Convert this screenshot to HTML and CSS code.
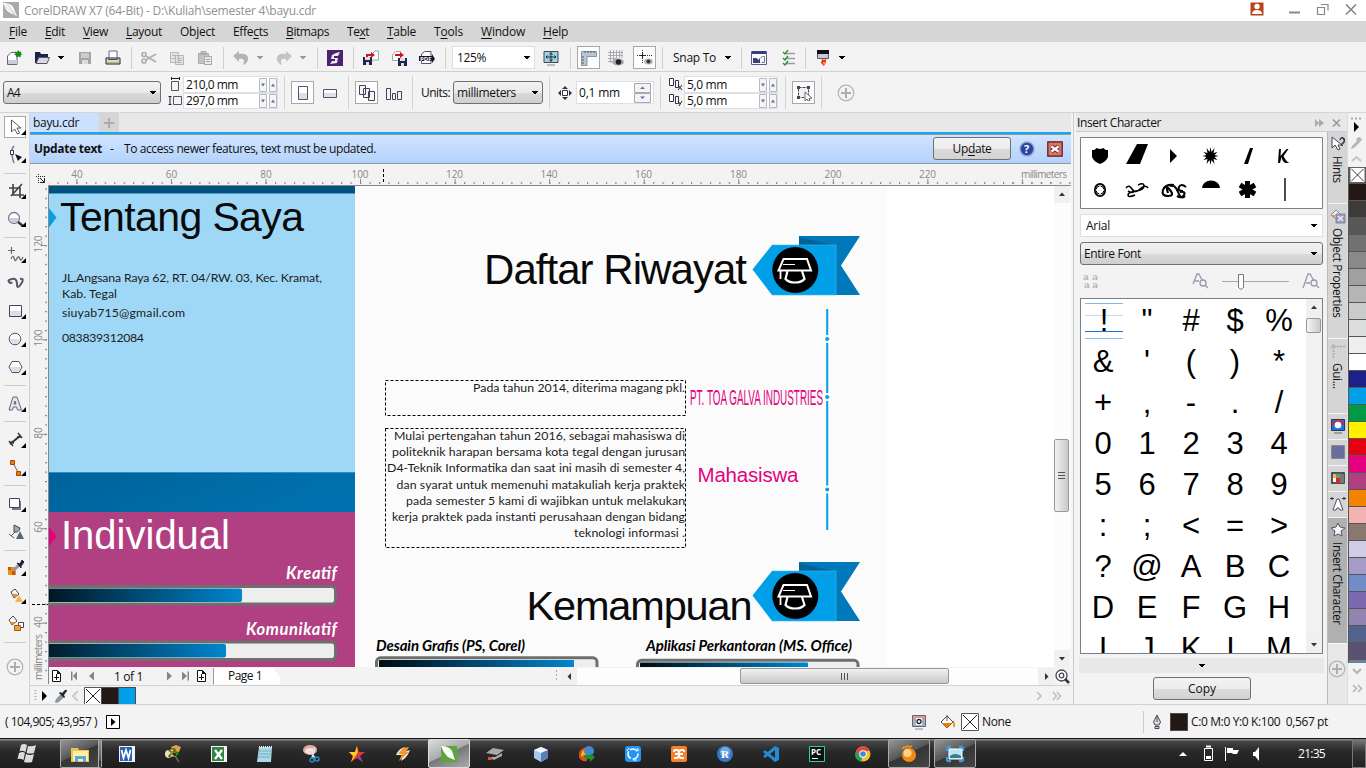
FILE: index.html
```html
<!DOCTYPE html>
<html lang="en">
<head>
<meta charset="utf-8">
<title>CorelDRAW X7 (64-Bit) - D:\Kuliah\semester 4\bayu.cdr</title>
<link rel="stylesheet" href="styles.css">
</head>
<body>
<svg class="defs" width="0" height="0">
  <defs>
    <symbol id="down" viewBox="0 0 8 16"><path d="M1 6h6v1h-1v1h-1v1h-2v-1h-1v-1h-1z"/></symbol>
    <symbol id="plus" viewBox="0 0 18 18"><circle cx="9" cy="9" r="7.800" fill="none" stroke="#b3b3b3" stroke-width="1.200"/><path d="M9 4v10M4 9h10" stroke="#adadad" stroke-width="2"/></symbol>
    <symbol id="spin" viewBox="0 0 18 14"><path d="M.5.5h7v13h-7zM10.500 .5h7v13h-7z" fill="#f5f5f5" stroke="#b9b9c0"/><path d="M2 5.500h4l-2 3zM12 8.500h4l-2-3z" fill="#5470b0"/></symbol>
    <symbol id="corner" viewBox="0 0 28 28"><path d="M25 17v5h-5z" fill="#000"/></symbol>
    <symbol id="page" viewBox="0 0 16 16"><path d="M3.500 2.500h5l3 3v8h-8z" fill="#fff" stroke="#111"/><path d="M8 2v4h4" fill="#111"/><path d="M7.500 6v6M5 9.500h5" stroke="#111"/></symbol>
    <symbol id="pen" viewBox="0 0 16 16"><path d="M2 14l1-3 5-5 3 3-5 5-3 1z" fill="#8a9a9e"/><path d="M7 4l2 1 3-3q2-1 2 1l-3 4 1 2-1 1-5-5z" fill="#26262e"/></symbol>
    <symbol id="none" viewBox="0 0 18 18"><path d="M.5.5h17v17h-17z" fill="#fff" stroke="#555"/><path d="M2 2l14 14M16 2l-14 14" stroke="#222"/></symbol>
    <linearGradient id="bar"><stop offset="0" stop-color="#000c12"/><stop offset="1" stop-color="#0086cf"/></linearGradient>
    <linearGradient id="band" x2="1" y2=".3"><stop offset="0" stop-color="#00629a"/><stop offset="1" stop-color="#0071ae"/></linearGradient>
    <pattern id="tickH" x="76.400" y="0" width="9.455" height="22" patternUnits="userSpaceOnUse"><path d="M0 18h1.200v2h-1.200z" fill="#888"/></pattern>
    <pattern id="tickH2" x="76.400" y="0" width="94.550" height="22" patternUnits="userSpaceOnUse"><path d="M0 15h1v5h-1z" fill="#888"/></pattern>
    <pattern id="tickV" x="30" y="245" width="20" height="9.440" patternUnits="userSpaceOnUse"><path d="M15 0h2v1.200h-2z" fill="#888"/></pattern>
    <pattern id="tickV2" x="30" y="245" width="20" height="94.400" patternUnits="userSpaceOnUse"><path d="M12 0h5v1h-5z" fill="#888"/></pattern>
    <g id="ribbon">
      <path d="M799 236h61l-19 29.500 19 29.500h-61z" fill="#0079bb"/><path d="M799 237l34 8h-34z" fill="#00649a"/>
      <path d="M752.500 269.500L772 245h64v50h-64z" fill="#009fe8"/><path d="M772 245h64v50h-64" fill="none" stroke="#42b8f0" stroke-width=".6"/>
      <circle cx="795.300" cy="270" r="23"/>
      <g fill="none" stroke="#fff" stroke-width="2"><path d="M783.500 259h23.500l4 11.500h-32.500z"/><path d="M783 264.500h12" stroke-width="1"/><path d="M787.500 271l-2 8q3 3.500 9.500 3.500t9.500-3.500l-2.500-8" stroke-width="2.200"/><path d="M780.500 271v3M780.500 274v5" stroke-width="1.800"/></g>
    </g>
  </defs>
</svg>
<div class="app">
  <header class="titlebar">
    <svg width="16" height="16" viewBox="0 0 16 16"><path d="M0 0h16v16H0z" fill="#aaa"/><path d="M0 1q7 0 10 4l4 9-7-3Q2 8 0 1z" fill="#fff"/><path d="M1 3l11 10M4 2l8 10" stroke="#aaa" stroke-width=".6"/></svg>
    <span class="title" data-w="292">CorelDRAW X7 (64-Bit) - D:\Kuliah\semester 4\bayu.cdr</span>
    <svg class="winbtns" width="112" height="20" viewBox="0 0 112 20"><path d="M3.500 2.500h13v13h-13z" fill="#b9431c"/><circle cx="10" cy="6.500" r="2.700" fill="#fff"/><path d="M5 14q0-4 5-4t5 4z" fill="#fff"/><path d="M42 12.500h11" stroke="#888" stroke-width="2"/><path d="M74 4.500h7v6M70.500 7.500h7v7h-7z" fill="none" stroke="#888" stroke-width="1.200"/><path d="M99 4.500l10 10M109 4.500l-10 10" stroke="#888" stroke-width="1.700"/></svg>
  </header>
  <nav class="menu">
    <span data-w="18"><u>F</u>ile</span><span data-w="20"><u>E</u>dit</span><span data-w="25"><u>V</u>iew</span><span data-w="36"><u>L</u>ayout</span><span data-w="35">Ob<u>j</u>ect</span><span data-w="35">Effe<u>c</u>ts</span><span data-w="43"><u>B</u>itmaps</span><span data-w="22">Te<u>x</u>t</span><span data-w="29"><u>T</u>able</span><span data-w="29">T<u>o</u>ols</span><span data-w="44"><u>W</u>indow</span><span data-w="25"><u>H</u>elp</span>
  </nav>
  <div class="toolbar standard">
    <svg class="i" viewBox="0 0 16 16"><path d="M1.500 6l3.500-3.500h6V14.500H1.500z" fill="#fff" stroke="#667"/><path d="M2 10h9v4H2z" fill="#ccd"/><path d="M12.500 0l1 2 2-.5-.5 2 1 1-1.500 1v2l-2-1-2 1-.5-2-2-1 1.500-1-.5-2 2 .500z" fill="#168a16"/></svg>
    <svg class="i" viewBox="0 0 16 16"><path d="M0 2h5l1 2h7v3H4l-3 6H0z" fill="#1c2348"/><path d="M4 7.500h10.500L12 13.500H1z" fill="#d8d8e6" stroke="#556"/></svg>
    <svg class="a"><use href="#down"/></svg>
    <svg class="i" viewBox="0 0 16 16"><path d="M2 2h12v12H2z" fill="#a5a5a5"/><path d="M4 3h8v5H4z" fill="#ccc"/><path d="M5 10h6v4H5z" fill="#ddd"/></svg>
    <svg class="i" viewBox="0 0 16 16"><path d="M4 1h8v8H4z" fill="#fff" stroke="#668"/><path d="M1 8h14v6H1z" fill="#d9dad3" stroke="#223"/><path d="M3 9h10v1H3z" fill="#555"/><path d="M2 13h12" stroke="#8a8d2a"/></svg>
    <i class="sep"></i>
    <svg class="i" viewBox="0 0 16 16" fill="none" stroke="#b0b0b0" stroke-width="1.700"><circle cx="3" cy="4.500" r="2"/><circle cx="3" cy="11" r="2"/><path d="M5 6l10 6M5 10l10-6"/></svg>
    <svg class="i" viewBox="0 0 16 16" fill="#e4e4e4" stroke="#b5b5b5"><path d="M1.500 2.500h8v10h-8zM6.500 5.500h8v9h-8z"/><path d="M3 5.500h4M3 8.500h3M8 8.500h5M8 10.500h5M8 12.500h5"/></svg>
    <svg class="i" viewBox="0 0 16 16" fill="#c2c2c2" stroke="#aaa"><path d="M1.500 3.500h10v10h-10zM4 1.500h5v3H4z"/><path d="M7.500 6.500h7v8h-7z" fill="#e8e8e8"/><path d="M9 9.500h4M9 11.500h4"/></svg>
    <i class="sep"></i>
    <svg class="i" viewBox="0 0 16 16"><path d="M0 6l6-5v3c7-1 10 2 9 6-1 4-5 5-5 5 2-4 1-7-4-6v3z" fill="#b4b4b4"/></svg>
    <svg class="a g"><use href="#down"/></svg>
    <svg class="i" viewBox="0 0 16 16"><path d="M16 6l-6-5v3C3 3 0 6 1 10c1 4 5 5 5 5-2-4-1-7 4-6v3z" fill="#c4c4c4"/></svg>
    <svg class="a g"><use href="#down"/></svg>
    <i class="sep"></i>
    <svg class="i" viewBox="0 0 16 16"><path d="M0 0h16v16H0z" fill="#4d226e"/><path d="M9 3l4-1-2 4H7v2h4l-1 5-7 1 2-3h3V9L4 9l1-4z" fill="#eee"/></svg>
    <i class="sep"></i>
    <svg class="i" viewBox="0 0 16 16"><path d="M9 4l3-3h3.500v9H9" fill="#fff" stroke="#9aa"/><path d="M0 7h9v8H0z" fill="#202650"/><path d="M2 7h5v3H2zM3 12h3v3H3z" fill="#dde"/><path d="M3 7V4h5V2l4 3-4 3V6H5v1z" fill="#d31515"/></svg>
    <svg class="i" viewBox="0 0 16 16"><path d="M1.500 5l3-3.500h5v9h-8z" fill="#fff" stroke="#9aa"/><path d="M7 8h9v8H7z" fill="#202650"/><path d="M9 8h5v3H9zM10 13h3v3h-3z" fill="#dde"/><path d="M4 6V4h5V2l4 3-4 3V6z" fill="#d31515"/></svg>
    <svg class="i pdf" viewBox="0 0 16 16"><path d="M2.500 4l3-2.500h6.500v12H2.500z" fill="#fff" stroke="#556"/><path d="M0 6h13V4l3 5-3 4v-2H0z" fill="#111430"/><text x="1" y="10.800" fill="#fff">PDF</text></svg>
    <i class="sep"></i>
    <div class="field zoom"><span data-w="29">125%</span><svg class="a"><use href="#down"/></svg></div>
    <svg class="i" viewBox="0 0 16 16"><path d="M1 1.500h14v11H1z" fill="#9ed4e2" stroke="#445"/><path d="M8 3v8M3 7h10M6.500 4.500l1.500-2 1.500 2M6.500 9.500l1.500 2 1.500-2M4.500 5.500L3 7l1.500 1.500M11.500 5.500L13 7l-1.500 1.500" fill="none" stroke="#223"/><path d="M4 15h8" stroke="#889"/></svg>
    <i class="sep"></i>
    <span class="press"><svg class="i" viewBox="0 0 16 16"><path d="M.5 1.500h15v5H6v9H.5z" fill="#b9c6d2" stroke="#8595a5"/><path d="M4 1v2M7 1v2M10 1v2M13 1v2M1 7h2M1 10h2M1 13h2" stroke="#556"/></svg></span>
    <svg class="i" viewBox="0 0 16 16"><path d="M2.500 0v13M5.500 0v13M8.500 0v8M11.500 0v8M14 0v8M0 2.500h15M0 5.500h15M0 8.500h9M0 11.500h5" stroke="#99a" stroke-width=".8"/><ellipse cx="10" cy="12" rx="6" ry="3.500" fill="#aaa"/><circle cx="10.500" cy="12" r="2.800" fill="#222"/></svg>
    <span class="press"><svg class="i" viewBox="0 0 16 16"><path d="M5.500 0v14M0 5.500h16" stroke="#333" stroke-dasharray="1 1"/><path d="M3 5.500h5M5.500 3v5" stroke="#222"/><ellipse cx="11.500" cy="11.500" rx="4.500" ry="3" fill="#bbb"/><circle cx="11.500" cy="11.500" r="2" fill="#333"/></svg></span>
    <i class="sep"></i>
    <span data-w="43">Snap To</span>
    <svg class="a"><use href="#down"/></svg>
    <i class="sep"></i>
    <svg class="i" viewBox="0 0 16 16"><path d="M.5 1.500h15v13H.5z" fill="#f8f8ff" stroke="#556088"/><path d="M1 1h14v3H1zM2 8h4l1 2 2-2v5H2z" fill="#3b4072"/><path d="M9.500 8l2-1.500h2v6h-3" fill="none" stroke="#778"/></svg>
    <svg class="i" viewBox="0 0 16 16"><path d="M6 3.500h9M6 8.500h9M6 13.500h9" stroke="#9a9aaa" stroke-width="1.300"/><path d="M3 2l2 2 3-4M3 8l2 2 3-4M3 13l2 2 3-4" fill="none" stroke="#2f8f2f" stroke-width="1.400"/></svg>
    <i class="sep"></i>
    <svg class="i" viewBox="0 0 16 16"><path d="M2.500 .5h11v8h-11z" fill="#c8c8da" stroke="#556"/><path d="M2 0h12v4H2z" fill="#111"/><path d="M7 9l2 1 2-1v3l-2 4-3-3z" fill="#f2300f"/><path d="M8 12h2l-1 3z" fill="#fd3"/></svg>
    <svg class="a"><use href="#down"/></svg>
  </div>
  <div class="toolbar property">
    <div class="select w158"><span data-w="13">A4</span><svg class="a"><use href="#down"/></svg></div>
    <svg width="14" height="32" viewBox="0 0 14 32"><path d="M3.500 4.500h7v9h-7z" fill="#f4f4f8" stroke="#556"/><path d="M3 1.500h9M3.500 0v3M11.500 0v3" stroke="#223"/><path d="M5.500 19.500h8v8h-8z" fill="#f4f4f8" stroke="#556"/><path d="M2 19v9M.5 19.500h3M.5 27.500h3" stroke="#223"/></svg>
    <div class="stack w95"><div class="field"><span data-w="52">210,0 mm</span><svg class="sp"><use href="#spin"/></svg></div><div class="field"><span data-w="52">297,0 mm</span><svg class="sp"><use href="#spin"/></svg></div></div>
    <i class="sep"></i>
    <span class="press"><svg class="i" viewBox="0 0 16 16"><path d="M3.500 1.500h9v13h-9z" fill="#fff" stroke="#556"/><path d="M4 8h8v6H4z" fill="#dde"/></svg></span>
    <svg class="i" viewBox="0 0 16 16"><path d="M1.500 4.500h13v8h-13z" fill="#fff" stroke="#556"/><path d="M2 8h12v4H2z" fill="#dde"/></svg>
    <i class="sep"></i>
    <span class="press"><svg class="i" viewBox="0 0 16 16" fill="#f4f4fa" stroke="#445"><path d="M.5.5h6v9h-6zM4.500 3.500h6v9h-6zM9.500 6.500h6v9h-6z"/></svg></span>
    <svg class="i" viewBox="0 0 16 16" fill="#f4f4fa" stroke="#445"><path d="M.5 3.500h4v11h-4zM6.500 8.500h3v6h-3zM11.500 6.500h4v8h-4z"/></svg>
    <i class="sep"></i>
    <span data-w="29">Units:</span>
    <div class="select w90"><span data-w="59">millimeters</span><svg class="a"><use href="#down"/></svg></div>
    <i class="sep"></i>
    <svg width="14" height="14" viewBox="0 0 14 14"><path d="M4.500 4.500h5v5h-5z" fill="#fff" stroke="#334"/><path d="M7 0l3 3H4zM7 14l3-3H4zM0 7l3-3v6zM14 7l-3-3v6z" fill="#334"/></svg>
    <div class="field tall"><span data-w="41">0,1 mm</span><svg width="18" height="20" viewBox="0 0 18 20"><path d="M.5.5h16v9H.5zM.5 10.500h16v9H.5z" fill="#f3f3f3" stroke="#aaa"/><path d="M6 6h5L8.500 3.500zM6 13.500h5L8.500 16z" fill="#5470b0"/></svg></div>
    <i class="sep"></i>
    <svg width="14" height="32" viewBox="0 0 14 32"><path d="M.5 1.500h4v7h-4zM6.500 3.500h3v7h-3zM.5 17.500h4v7h-4zM6.500 19.500h3v7h-3z" fill="#fff" stroke="#334"/><path d="M9 8l4 5M13 8l-4 5M9 24l2 3M13 24l-3 5" stroke="#223"/></svg>
    <div class="stack w94"><div class="field"><span data-w="40">5,0 mm</span><svg class="sp"><use href="#spin"/></svg></div><div class="field"><span data-w="40">5,0 mm</span><svg class="sp"><use href="#spin"/></svg></div></div>
    <i class="sep"></i>
    <span class="press"><svg class="i" viewBox="0 0 16 16"><path d="M2.500 2.500h10v10h-10z" fill="#f0f0f6" stroke="#445" stroke-dasharray="3 1"/><path d="M1 1h3v3H1zM11 1h3v3h-3zM1 11h3v3H1z" fill="#445"/><path d="M9 7l7 6-3 .5 1 2-2 .5-1-2-2 2z" fill="#fff" stroke="#667"/></svg></span>
    <i class="sep"></i>
    <svg width="18" height="18"><use href="#plus"/></svg>
  </div>

  <main class="work">
    <aside class="tools">
      <span class="t on"><svg viewBox="0 0 28 28"><path d="M10.500 7v12l3-3 3 5 2-1-2.500-5h4z" fill="#fff" stroke="#556"/><use href="#corner"/></svg></span>
      <span class="t"><svg viewBox="0 0 28 28"><path d="M13 5q-3 3-2 9t2 8" fill="none" stroke="#778" stroke-width="1.500"/><path d="M9.500 9.500h3v4h-3z" fill="#fff" stroke="#334"/><path d="M14 13l7 3-4 4z" fill="#15152a"/><use href="#corner"/></svg></span>
      <i></i>
      <span class="t"><svg viewBox="0 0 28 28"><path d="M12 7v11h11M8 11h11v10M10 19L21 7" fill="none" stroke="#445" stroke-width="1.700"/><use href="#corner"/></svg></span>
      <span class="t"><svg viewBox="0 0 28 28"><circle cx="13" cy="13" r="5.500" fill="#fff" stroke="#778" stroke-width="1.300"/><path d="M8 13h10a5 5 0 0 1-10 0z" fill="#ccd"/><path d="M17 17l5 4" stroke="#334" stroke-width="2.500"/><use href="#corner"/></svg></span>
      <i></i>
      <span class="t"><svg viewBox="0 0 28 28"><path d="M10.500 6v7M7 9.500h7M10 18q2-5 3-1t2 2 2-3 2 2 3-2" fill="none" stroke="#667" stroke-width="1.200"/><use href="#corner"/></svg></span>
      <span class="t"><svg viewBox="0 0 28 28"><path d="M11 13q-1 2-3 0t3-3 5 5 4 0-1-5" fill="none" stroke="#556" stroke-width="2"/></svg></span>
      <span class="t"><svg viewBox="0 0 28 28"><path d="M8.500 8.500h12v11h-12z" fill="#fff" stroke="#446"/><path d="M9 14h11v5H9z" fill="#dde"/><use href="#corner"/></svg></span>
      <span class="t"><svg viewBox="0 0 28 28"><circle cx="14" cy="14" r="5.800" fill="#fff" stroke="#556"/><path d="M9 14h10a5 5 0 0 1-10 0z" fill="#dde"/><use href="#corner"/></svg></span>
      <span class="t"><svg viewBox="0 0 28 28"><path d="M8 14l3-5.500h7l3 5.500-3 5.500h-7z" fill="#fff" stroke="#556"/><path d="M9 14h11l-3 5h-5z" fill="#dde"/><use href="#corner"/></svg></span>
      <i></i>
      <span class="t"><svg viewBox="0 0 28 28"><path d="M12 7h4l4.500 13h-4l-1-3h-3l-1 3H8zM14 11l-1 3h2z" fill="#e4e4ee" stroke="#667"/><use href="#corner"/></svg></span>
      <i></i>
      <span class="t"><svg viewBox="0 0 28 28"><path d="M9 18l10-8" stroke="#334" stroke-width="2"/><path d="M8 15l4 5M17 7l4 5M13 17l-4-1M16 11l4 0" stroke="#334" stroke-width="1.500"/><use href="#corner"/></svg></span>
      <span class="t"><svg viewBox="0 0 28 28"><path d="M12 9l5 9" stroke="#667"/><path d="M9.500 6.500h4v4h-4zM15.500 17.500h4v4h-4z" fill="#f27a00" stroke="#a44a00"/><use href="#corner"/></svg></span>
      <i></i>
      <span class="t"><svg viewBox="0 0 28 28"><path d="M11 11h9v9h-9z" fill="#778"/><path d="M8.500 8.500h10v9h-10z" fill="#fff" stroke="#446"/><use href="#corner"/></svg></span>
      <span class="t"><svg viewBox="0 0 28 28"><path d="M13 7l6 3q-1 5-6 4z" fill="#9ab" stroke="#445"/><path d="M14 14l-4 4M8 16l5 4" stroke="#556"/><path d="M19 13l4 8h-8z" fill="#567"/></svg></span>
      <i></i>
      <span class="t"><svg viewBox="0 0 28 28"><path d="M7 13h8v8H7z" fill="#f28a18"/><path d="M7 13h3v3H7zM11 17h3v4h-3z" fill="#c35700"/><path d="M12 17l6-6" stroke="#89a" stroke-width="3"/><path d="M16 9l3 1 2-4 2 2-3 4v2z" fill="#223" stroke="#223"/><use href="#corner"/></svg></span>
      <span class="t"><svg viewBox="0 0 28 28"><path d="M10 10l4-3 4 5-5 4z" fill="#fff" stroke="#445"/><path d="M11 12h6l-4 3z" fill="#f08a1a"/><path d="M18 13l4 7h-8z" fill="#f3b64d"/><use href="#corner"/></svg></span>
      <span class="t"><svg viewBox="0 0 28 28"><path d="M8 10l4-4 4 5-5 4z" fill="#fff" stroke="#445"/><path d="M9 12h6l-4 3z" fill="#f08a1a"/><path d="M17.500 12.500h5v5h-5z" fill="#fff" stroke="#445"/><path d="M13.500 15.500h6v5h-6z" fill="#f3a040" stroke="#a55a10"/></svg></span>
      <i></i>
      <span class="t add"><svg viewBox="0 0 18 18"><use href="#plus"/></svg></span>
    </aside>

    <section class="docarea">
      <div class="tabs"><span class="tab"><b data-w="46">bayu.cdr</b></span><span class="newtab"><svg width="12" height="12" viewBox="0 0 12 12"><path d="M6 1v10M1 6h10" stroke="#aaa" stroke-width="2"/></svg></span></div>
      <div class="notice"><strong data-w="68">Update text</strong><span class="dash">-</span><span data-w="252">To access newer features, text must be updated.</span>
        <button class="btn upd"><span data-w="39">Up<u>d</u>ate</span></button>
        <svg class="q" width="16" height="16" viewBox="0 0 16 16"><circle cx="8" cy="8" r="7" fill="#2846a8" stroke="#9aa5c8" stroke-width="1.500"/><text x="5" y="12" font-size="11" font-weight="700" fill="#fff">?</text></svg>
        <svg width="16" height="16" viewBox="0 0 16 16"><path d="M.8.800h14.400v14.400H.8z" fill="#d5756b" stroke="#611" stroke-width="1.200"/><path d="M4.500 5.500l7 5M11.500 5.500l-7 5" stroke="#622" stroke-width="4"/><path d="M4.500 5.500l7 5M11.500 5.500l-7 5" stroke="#fff" stroke-width="2.300"/></svg>
      </div>
      <svg class="hruler" width="1041" height="22" viewBox="30 0 1041 22">
        <path d="M49 14h1006v6H49z" fill="url(#tickH)"/><path d="M49 14h1006v6H49z" fill="url(#tickH2)"/><path d="M1011 14h60v6h-60z" fill="url(#tickH)"/>
        <path d="M48 21.500h1024" stroke="#888"/><path d="M383.500 5v15" stroke="#000" stroke-dasharray="3 2"/>
        <path d="M38.500 10v10M36 12.500h10" stroke="#222" stroke-dasharray="1 1"/><path d="M40 14l4 4M44.500 14v4.500H40" fill="none" stroke="#222"/>
        <g class="rn"><text x="77" y="14">40</text><text x="171.500" y="14">60</text><text x="266" y="14">80</text><text x="360" y="14">100</text><text x="454.500" y="14">120</text><text x="549" y="14">140</text><text x="643.500" y="14">160</text><text x="738.500" y="14">180</text><text x="833" y="14">200</text><text x="927.500" y="14">220</text><text x="1044" y="14" textLength="46">millimeters</text></g>
      </svg>
      <div class="view">
        <svg class="vruler" width="19" height="499" viewBox="30 186 19 499">
          <path d="M30 186h18v490H30z" fill="url(#tickV)"/><path d="M30 186h18v490H30z" fill="url(#tickV2)"/><path d="M48.500 186v498" stroke="#888"/><path d="M32 604.500h16" stroke="#000" stroke-dasharray="3 2"/>
          <g class="rn"><text transform="translate(41.500 244)rotate(-90)">120</text><text transform="translate(41.500 338)rotate(-90)">100</text><text transform="translate(41.500 433)rotate(-90)">80</text><text transform="translate(41.500 527)rotate(-90)">60</text><text transform="translate(41.500 622)rotate(-90)">40</text><text transform="translate(41.500 657)rotate(-90)" textLength="46">millimeters</text></g>
        </svg>
        <div class="center">
          <div class="upper">
            <svg class="canvas" width="1005" height="481" viewBox="49 186 1005 481">
              <path d="M49 186h1006v481H49z" fill="#fff"/><path d="M355 186h532v481H355z" fill="#fbfbfb"/>
              <path d="M49 186h306v8H49z" fill="#005280"/><path d="M49 193.500h306V472H49z" fill="#9fd8f6"/><path d="M49 472h306v40H49z" fill="url(#band)"/><path d="M49 472.500h306" stroke="#2a90c8"/><path d="M49 512h306v155H49z" fill="#b04082"/>
              <path d="M49 208l7.500 9.500-7.500 10z" fill="#009fe8"/><path d="M49 527l7.500 9.500-7.500 9.500z" fill="#e4007f"/>
              <g class="arial"><text x="60" y="231" font-size="41" textLength="244">Tentang Saya</text><text x="61" y="549" font-size="40" fill="#fff" textLength="169">Individual</text><text x="484" y="284" font-size="42" textLength="263">Daftar Riwayat</text><text x="526.500" y="620" font-size="41.500" textLength="226">Kemampuan</text>
                <g fill="#e4007f"><text x="690" y="405" font-size="22.500" textLength="133" lengthAdjust="spacingAndGlyphs">PT. TOA GALVA INDUSTRIES</text><text x="697.500" y="482" font-size="20.500" textLength="101">Mahasiswa</text></g></g>
              <g class="lato"><text x="62" y="282" textLength="260">JL.Angsana Raya 62, RT. 04/RW. 03, Kec. Kramat,</text><text x="62" y="298" textLength="55">Kab. Tegal</text><text x="62" y="316.500" textLength="123">siuyab715@gmail.com</text><text x="62" y="342" textLength="82">083839312084</text>
                <text x="473" y="392" textLength="212">Pada tahun 2014, diterima magang pkl.</text>
                <text x="394" y="440" textLength="291">Mulai pertengahan tahun 2016, sebagai mahasiswa di</text><text x="392" y="456.300" textLength="293">politeknik harapan bersama kota tegal dengan jurusan</text><text x="387" y="472.300" textLength="298">D4-Teknik Informatika dan saat ini masih di semester 4,</text><text x="396.500" y="488.800" textLength="288.500">dan syarat untuk memenuhi matakuliah kerja praktek</text><text x="406" y="505" textLength="279">pada semester 5 kami di wajibkan untuk melakukan</text><text x="392" y="521.300" textLength="293">kerja praktek pada instanti perusahaan dengan bidang</text><text x="574" y="537.300" textLength="111">teknologi informasi .</text></g>
              <path d="M385.500 380.500h300v35h-300zM385.500 428.500h300v119h-300z" fill="none" stroke="#000" stroke-dasharray="3 2"/>
              <path d="M827.200 309v221" stroke="#009fe8" stroke-width="2"/><g fill="#009fe8" stroke="#fbfbfb" stroke-width="2"><circle cx="827.200" cy="339" r="3"/><circle cx="827.200" cy="397" r="3"/><circle cx="827.200" cy="489.500" r="3"/></g>
              <use href="#ribbon"/><use href="#ribbon" y="326"/>
              <g stroke="#6f6f6f" stroke-width="3" fill="#eee"><rect x="20" y="586.500" width="315.500" height="17.500" rx="4"/><rect x="20" y="642" width="315.500" height="17.500" rx="4"/><rect x="376.500" y="657.800" width="220.500" height="20" rx="4"/><rect x="637.500" y="660.300" width="220.500" height="20" rx="4"/></g>
              <path d="M49 588h204" stroke="none" fill="none"/>
              <g fill="url(#bar)"><rect x="30" y="588.500" width="212" height="13.500" rx="2"/><rect x="20" y="644" width="206" height="13.500" rx="2"/><rect x="379" y="660" width="195" height="12" rx="1"/><rect x="640" y="662.500" width="168" height="12" rx="1"/></g>
              <g class="cal"><text class="big" x="286" y="578.500" fill="#fff" textLength="51">Kreatif</text><text class="big" x="246" y="635" fill="#fff" textLength="91">Komunikatif</text><text x="376" y="650.500" textLength="149">Desain Grafis (PS, Corel)</text><text x="646" y="650.500" textLength="206">Aplikasi Perkantoran (MS. Office)</text></g>
            </svg>
            <div class="vscroll"><svg class="cap" viewBox="0 0 16 17"><path d="M5 10h6L8 6.500z"/></svg><div class="vthumb"></div><svg class="cap" viewBox="0 0 16 17"><path d="M5 7h6l-3 3.500z"/></svg></div>
          </div>
          <div class="pagenav">
            <svg class="i"><use href="#page"/></svg>
            <svg width="44" height="16" viewBox="0 0 44 16" class="grey"><path d="M5 3.500h1.500v9H5zM11 3.500v9L7 8zM28 3.500v9L23 8z"/></svg>
            <span class="pg" data-w="29">1 of 1</span>
            <svg width="36" height="16" viewBox="0 0 36 16" class="grey"><path d="M3 3.500v9L8 8zM18 3.500v9L23 8zM23.500 3.500H25v9h-1.500z"/></svg>
            <svg class="i"><use href="#page"/></svg>
            <div class="ptab"><span data-w="34">Page 1</span></div>
            <div class="grip"></div>
            <div class="hscroll"><svg viewBox="0 0 16 17" class="cap"><path d="M10 5v7L6.500 8.500z"/></svg><div class="hthumb"></div><svg viewBox="0 0 16 17" class="cap"><path d="M7 5v7l3.500-3.500z"/></svg></div>
            <svg width="17" height="17" viewBox="0 0 17 17"><circle cx="7.500" cy="7.500" r="5.500" fill="#fff" stroke="#445" stroke-width="1.300"/><circle cx="7.500" cy="7.500" r="2.300" fill="none" stroke="#445" stroke-width="1.300"/><path d="M11 11l4 4" stroke="#334" stroke-width="2.500"/></svg>
          </div>
        </div>
      </div>
      <div class="docpal">
        <svg width="46" height="18" viewBox="0 0 46 18"><path d="M1.500 3v12" stroke="#aaa" stroke-dasharray="1 2" stroke-width="2"/><path d="M8 4v10l5-5z"/><path d="M44 4l-5 5 5 5" fill="none" stroke="#ccc" stroke-width="2"/><use href="#pen" x="19" y="1" width="16" height="16"/></svg>
        <svg class="sw"><use href="#none"/></svg><div class="sw k"></div><div class="sw c"></div>
        <svg class="more" width="30" height="18" viewBox="0 0 30 18" fill="none" stroke="#c2c2c2" stroke-width="1.700"><path d="M2 5l4 4-4 4M18 5l3.500 4-3.500 4M22 5l3.500 4-3.500 4"/></svg>
      </div>
    </section>

    <aside class="docker">
      <div class="dhead"><span data-w="84">Insert Character</span><svg width="32" height="16" viewBox="0 0 32 16"><path d="M3 4l4 4-4 4zM7 4l5 4-5 4z" fill="#aaa"/><path d="M21 4.500l7 7M28 4.500l-7 7" stroke="#999" stroke-width="1.700"/></svg></div>
      <svg class="recent" width="243" height="72" viewBox="1080 137 243 72"><path d="M1080.500 137.500h242v71h-242z" fill="#fff" stroke="#7a7f8a"/>
        <path d="M1092 150q4 0 4-2l4 1 4-1q0 2 4 2v7q-2 5-8 7-6-2-8-7zM1137 144h11l-8 20h-14zM1170 149l7 7-7 7z"/>
        <path d="M1210.500 147l1 5 3-4-1 5 4-1-3 3 4 1-4 1 3 3-4-1 1 5-3-4-1 5-1-5-3 4 1-5-4 1 3-3-4-1 4-1-3-3 4 1-1-5 3 4z"/>
        <path d="M1250 148h3l-5 16h-4zM1279 149h2l-.5 7 6-7h2l-5 7q3 6 6 7h-4q-3-1-4-6l-1.500 6h-2z"/>
        <circle cx="1100" cy="190" r="4" fill="none" stroke="#000"/><ellipse cx="1100" cy="190" rx="5.200" ry="6.200" fill="none" stroke="#000" stroke-width="1.700"/><path d="M1100 186v8M1096 190h8" stroke="#fff" stroke-width="1.500" stroke-dasharray="2 4"/>
        <g fill="none" stroke="#000"><path d="M1126 188q3-4 6 1t8 0 8-1M1138 185q6-3 6 1t-8 5-8 4 7 0M1128 191q4 3 7 0" stroke-width="1.600"/><path d="M1174 185q-9-1-11 5t5 6 2-6-2 3M1170 186q5-2 8 6t7 4M1186 187q-5-4-7 0t4 4M1180 192q6-1 4 3t-7 1" stroke-width="2.100"/></g>
        <path d="M1202 188a9 7.500 0 0 1 18 0z"/><path d="M1247.500 181v17M1240 185l15 9M1255 185l-15 9" stroke="#000" stroke-width="5"/><path d="M1285 178v23" stroke="#000" stroke-width="1.400"/></svg>
      <div class="field combo"><span data-w="24">Arial</span><svg class="a"><use href="#down"/></svg></div>
      <div class="select combo"><span data-w="57">Entire Font</span><svg class="a"><use href="#down"/></svg></div>
      <svg class="sizes" width="243" height="33" viewBox="1080 265 243 33"><g fill="#b5b5b5" class="aa"><text x="1083" y="280" textLength="15">aa</text><text x="1084" y="288" textLength="14">aa</text></g><path d="M1222 281.500h67" stroke="#aaa"/><path d="M1238.500 274.500h5v13l-2.500 2-2.500-2z" fill="#fff" stroke="#777"/>
        <g fill="none" stroke="#99a" stroke-width="1.300"><path d="M1193 284l4-10h2l3 6M1195 281h4"/><circle cx="1203" cy="283" r="3"/><path d="M1205 285l3 3"/><path d="M1303 288l5-14h2l4 7M1306 283h4"/><circle cx="1314" cy="283" r="3"/><path d="M1316 285l3 3"/></g></svg>
      <div class="glyphs"><div class="gridg">
        <span class="sel">!</span><span>"</span><span>#</span><span>$</span><span>%</span><span>&amp;</span><span>'</span><span>(</span><span>)</span><span>*</span><span>+</span><span>,</span><span>-</span><span>.</span><span>/</span><span>0</span><span>1</span><span>2</span><span>3</span><span>4</span><span>5</span><span>6</span><span>7</span><span>8</span><span>9</span><span>:</span><span>;</span><span>&lt;</span><span>=</span><span>&gt;</span><span>?</span><span>@</span><span>A</span><span>B</span><span>C</span><span>D</span><span>E</span><span>F</span><span>G</span><span>H</span><span>I</span><span>J</span><span>K</span><span>L</span><span>M</span></div>
        <div class="gscroll"><svg class="cap" viewBox="0 0 16 17"><path d="M5 10h6L8 6.500z"/></svg><div class="gthumb"></div><svg class="cap end" viewBox="0 0 16 17"><path d="M5 7h6l-3 3.500z"/></svg></div></div>
      <div class="expand"><svg class="a"><use href="#down"/></svg></div>
      <button class="btn copy"><span data-w="28">Copy</span></button>
    </aside>
    <aside class="dtabs">
      <div class="h1"><svg class="i" viewBox="0 0 16 16"><path d="M2 1v11l3-3 3 5 2-1-2-4h4z" fill="#fff" stroke="#445"/><path d="M10 4q1-3 3-2t1 4l-2 2v2" fill="none" stroke="#334" stroke-width="1.500"/></svg><span>Hints</span></div>
      <div class="h2"><svg class="i" viewBox="0 0 16 16"><path d="M1 7l5-5 5 5-5 4z" fill="#eef" stroke="#889"/><path d="M6 6h9v9H6z" fill="#99b" stroke="#889"/><path d="M8 8l5 5M13 8l-5 5" stroke="#eef" stroke-width="1.500"/><path d="M2 7h4l-2 3z" fill="#f09020"/></svg><span>Object Properties</span></div>
      <div class="h3"><svg class="i" viewBox="0 0 16 16"><path d="M3.500 1v14M1 3.500h14" stroke="#aab" stroke-width="1.500" stroke-dasharray="2 1"/></svg><span>Gui...</span></div>
      <div class="h4"><svg class="i" viewBox="0 0 16 16"><path d="M1.500 1.500h13v11h-13z" fill="#1674ee" stroke="#334"/><path d="M3 3h10v4H3z" fill="#f11"/><circle cx="8" cy="7" r="3.300" fill="#fff"/><path d="M4 15h8" stroke="#667"/></svg></div>
      <div class="h4"><svg class="i" viewBox="0 0 16 16"><path d="M1.500 1.500h13v13h-13z" fill="#6a6e9e" stroke="#888"/></svg></div>
      <div class="h4"><svg class="i" viewBox="0 0 16 16"><path d="M2 3h12v10H2z" fill="#fff" stroke="#223" stroke-width="1.500"/><path d="M3 4h3v4H3z" fill="#f0bc30"/><path d="M6 4h4v4H6z" fill="#697"/><path d="M6 8h4v5H6z" fill="#d22"/><path d="M10 4h4v9h-4z" fill="#777"/></svg></div>
      <div class="h4"><svg class="i" viewBox="0 0 16 16"><path d="M7 3h2l4 11h-3l-1-2H7l-1 2H3z" fill="#fff" stroke="#556"/><path d="M0 2.500h4M2 1v3M12 2.500h4M14 1v3" stroke="#334"/></svg></div>
      <div class="h5"><svg class="i" viewBox="0 0 16 16"><path d="M8 1l2 4 5 1-4 3 1 5-4-2-4 2 1-5-4-3 5-1z" fill="#f4f4ff" stroke="#556"/></svg><span>Insert Character</span></div>
      <svg class="dadd" width="18" height="18"><use href="#plus"/></svg>
    </aside>
    <aside class="palette">
      <svg width="18" height="54" viewBox="0 0 18 54"><path d="M3 5.500h10" stroke="#aaa" stroke-dasharray="2 2" stroke-width="2"/><path d="M6 9v10l5-5z"/><path d="M3 36l1-3 5-5 2 2-5 5zM9 25l3-1 2 3-3 3-3-3z" fill="#b5b5b5"/><path d="M4 48l4.500-4 4.500 4" fill="none" stroke="#c5c5c5" stroke-width="2"/></svg>
      <div class="colors" id="colors"><svg class="sw"><use href="#none"/></svg></div>
      <svg width="18" height="40" viewBox="0 0 18 40" fill="none" stroke="#b5b5b5" stroke-width="2"><path d="M5 6l4 4 4-4"/><path d="M5 22l3.500 3.500L5 29M10 22l3.500 3.500L10 29" stroke-width="1.500"/></svg>
    </aside>
  </main>

  <footer class="status">
    <span class="pos" data-w="92">( 104,905; 43,957 )</span>
    <svg width="14" height="14" viewBox="0 0 14 14"><path d="M.5.5h13v13H.5z" fill="#fff" stroke="#000"/><path d="M5 3v8l4.500-4z"/></svg>
    <svg class="i s1" viewBox="0 0 16 16"><path d="M1.500 1.500h13v11h-13z" fill="#a4b1c6" stroke="#667"/><path d="M2 2h12v4H2z" fill="#d79a9a"/><path d="M5 4h6v7H5z" fill="#fff"/><circle cx="8" cy="7.500" r="2" fill="none" stroke="#222" stroke-width="1.300"/><path d="M4 15h8" stroke="#88a"/></svg>
    <svg class="i s2" viewBox="0 0 16 16"><path d="M1 8l6-6 6 6-6 6z" fill="#fff" stroke="#445"/><path d="M2 9h10l-5 5z" fill="#f08000"/><path d="M7 7V1" stroke="#556"/><path d="M13 7q2 3 1 6" fill="none" stroke="#e88010" stroke-width="1.500"/></svg>
    <svg class="sw"><use href="#none"/></svg><span class="s3" data-w="29">None</span>
    <i class="sep"></i>
    <svg class="i s4" viewBox="0 0 16 16"><path d="M8 1l3.500 7-1.500 3H6L4.500 8zM6 12.500h4v2H6z" fill="#ddd" stroke="#445"/><path d="M8 3v5" stroke="#445"/></svg>
    <div class="sw ink"></div><span class="s3" data-w="137">C:0 M:0 Y:0 K:100&nbsp; 0,567 pt</span>
  </footer>

  <footer class="taskbar">
    <span><svg viewBox="0 0 24 24"><path d="M6 3q3-2 6 0l-1.500 7q-4-2-6-.5zM13 4q4 1 8-1l-2 8q-4 1-7.500 0zM4 11q4-2 6 0l-1.500 7q-3-2-6-1zM11 12q4 2 8 0l-2 8q-4 1-8 0z" fill="#dcdcdc"/></svg></span>
    <span class="tb exp"><svg viewBox="0 0 24 24"><path d="M3 6h7l1 2h10v12H3z" fill="#e8c45a"/><path d="M5 9h15v10H5z" fill="#ffefa5"/><path d="M7 20v-6h11v6h-3v-3h-5v3z" fill="#55a9df"/></svg></span>
    <span><svg viewBox="0 0 24 24"><path d="M4 4h16v16H4z" fill="#eef5ff"/><path d="M5 5h12v14H5z" fill="#2a62b5"/><path d="M6.500 8l2 8 2.500-8 2.500 8 2-8" fill="none" stroke="#fff" stroke-width="1.800"/></svg></span>
    <span><svg viewBox="0 0 24 24"><path d="M10 5l5-2 5 2-2 5-6 1z" fill="#e0a050"/><circle cx="8" cy="12" r="4" fill="#e4e4c0"/><path d="M8 7h6v2h-2v4h2v2H8v-2h2V9H8z" fill="#eedc30" stroke="#111" stroke-width=".8"/><path d="M14 8l4 3-3 4z" fill="#178a22"/><path d="M14 14l4 6" stroke="#999"/></svg></span>
    <span><svg viewBox="0 0 24 24"><path d="M4 4h16v16H4z" fill="#effaef"/><path d="M5 5h12v14H5z" fill="#328448"/><path d="M8 8l7 9M15 8l-7 9" stroke="#fff" stroke-width="2.300"/></svg></span>
    <span><svg viewBox="0 0 24 24"><path d="M6 5h13l-1 15H4z" fill="#a9d8e8"/><path d="M6 9h12M6 12h12M5 15h12" stroke="#77adc0"/><path d="M6 5h13" stroke="#eee" stroke-width="2" stroke-dasharray="1 1"/></svg></span>
    <span><svg viewBox="0 0 24 24"><ellipse cx="11" cy="8" rx="7" ry="5" fill="#e3a9a0"/><ellipse cx="11" cy="9" rx="5" ry="3" fill="#efe4e0"/><path d="M16 5l-3 11M10 8l6 8" stroke="#ddd" stroke-width="1.500"/><circle cx="13" cy="18" r="2" fill="none" stroke="#2987c8" stroke-width="1.500"/><circle cx="18" cy="17" r="2" fill="none" stroke="#2987c8" stroke-width="1.500"/></svg></span>
    <span><svg viewBox="0 0 24 24"><path d="M12 4l2 6h6l-5 4 3 6-6-4-6 4 2-6-4-4h6z" fill="#e33b31"/><path d="M12 4l1 7-9-1 2 1 5 0z" fill="#fa3"/><path d="M12 4v8l-6 8 2-6-4-4h6z" fill="#fc2"/><path d="M12 12l6 8-6-4z" fill="#7546bb"/></svg></span>
    <span><svg viewBox="0 0 24 24"><path d="M5 13q3-7 9-8l-4 6 9-3q-3 8-9 11l2-6z" fill="#eee"/><path d="M12 6l6-1-3 5h3l-10 9 3-7H7z" fill="#f39b2a"/></svg></span>
    <span class="tb lit"><svg viewBox="0 0 24 24"><path d="M4 4h16v16H4z" fill="#5ba63a"/><path d="M4 4q8 0 11 5l3 9q-10-2-14-14z" fill="#fff"/></svg></span>
    <span><svg viewBox="0 0 24 24"><path d="M3 11l7-5 11 2-7 5zM6 15l5 3 8-4v-3l-7 4z" fill="#aaa"/><path d="M5 15h4v3H5z" fill="#d65532"/></svg></span>
    <span><svg viewBox="0 0 24 24"><path d="M12 5l7 3v8l-7 4-7-4V8z" fill="#a8c7ea"/><path d="M5 8l7 3 7-3-7-3z" fill="#edf5ff"/><path d="M12 11v9l7-4V8z" fill="#5b7fb3"/></svg></span>
    <span><svg viewBox="0 0 24 24"><path d="M4 15q-1-8 7-10l1 14q-6 1-8-4z" fill="#e54b20"/><path d="M6 14q0-6 6-7v8z" fill="#fb0"/><circle cx="14" cy="9" r="5" fill="#428ad0"/><path d="M8 13h7v-2l5 4-5 5v-3q-5 1-7-4z" fill="#20902a"/></svg></span>
    <span><svg viewBox="0 0 24 24"><rect x="4" y="4" width="16" height="16" rx="3" fill="#2595f5"/><circle cx="12" cy="12" r="5" fill="none" stroke="#fff" stroke-width="1.500" stroke-dasharray="8 2"/><path d="M6 9l2-3M18 9l-2-3M12 18h4" stroke="#fff"/></svg></span>
    <span><svg viewBox="0 0 24 24"><rect x="4" y="4" width="16" height="16" rx="2" fill="#f5822a"/><path d="M7 8h3q2 0 2 4t-2 4H7M17 8h-3q-2 0-2 4t2 4h3M8 12h8M7 8v2M17 8v2" fill="none" stroke="#fff" stroke-width="1.800"/></svg></span>
    <span><svg viewBox="0 0 24 24"><circle cx="12" cy="12" r="8" fill="#3978c7"/><circle cx="12" cy="10" r="5" fill="#74aae1"/><text x="8" y="16" font-size="11" font-weight="700" fill="#fff">R</text></svg></span>
    <span><svg viewBox="0 0 24 24"><path d="M16 4l4 2v12l-4 2L4 10l2-2 10 8V8L6 16l-2-2z" fill="#258bd2"/></svg></span>
    <span><svg class="pc" viewBox="0 0 24 24"><path d="M4.500 4.500h15v15h-15z" fill="#111" stroke="#21d789"/><text x="6" y="13" font-size="8" font-weight="700" fill="#fff">PC</text><path d="M7 16.500h6" stroke="#fff"/></svg></span>
    <span><svg viewBox="0 0 24 24"><circle cx="12" cy="12" r="7.500" fill="#eac62b"/><path d="M5 9a7.500 7.500 0 0 1 14 0h-7l-4 5z" fill="#df4a3a"/><path d="M5 9l6 7-1 4q-8-3-5-11z" fill="#28a052"/><circle cx="12" cy="12" r="3.800" fill="#fff"/><circle cx="12" cy="12" r="2.800" fill="#4285e8"/></svg></span>
    <span class="tb"><svg viewBox="0 0 24 24"><circle cx="12" cy="13" r="7" fill="#f18a12"/><circle cx="10.500" cy="11" r="4" fill="#ffd28a"/><path d="M5 7l2-2 2 1 1-2 3 1 2-1" fill="none" stroke="#f5931c" stroke-width="1.500"/></svg></span>
    <span class="tb"><svg viewBox="0 0 24 24"><path d="M4 5h4M4 5v4M20 5h-4M20 5v4M4 19h4M4 19v-4M20 19h-4M20 19v-4" stroke="#3c98df" stroke-width="2.500"/><path d="M6 7h13v10H6z" fill="#b9e4f5" stroke="#fff"/><path d="M7 14q5-4 11 0v2H7z" fill="#347d8b"/></svg></span>
    <div class="tray"><svg width="100" height="24" viewBox="0 0 100 24"><path d="M4 14h8l-4-4z" fill="#fff"/><path d="M29.500 6.500h8v12h-8z" fill="none" stroke="#fff"/><path d="M31 4.500h5" stroke="#fff" stroke-width="2"/><path d="M31 14h5v3h-5z" fill="#fff"/><path d="M50.500 5v14" stroke="#fff"/><path d="M52 6h6v2h6l-2 4h-4l-1-1h-5z" fill="#fff"/><path d="M78 10h2l4-5v14l-4-5h-2z" fill="#fff"/></svg><span data-w="27">21:35</span></div>
    <div class="peek"></div>
  </footer>
</div>
<script src="app.js"></script>
</body>
</html>
```

FILE: styles.css
```css
* { box-sizing: border-box; }
body { margin: 0; width: 1366px; height: 768px; overflow: hidden; background: #f3f3f3; font: 12px/16px "Open Sans", "Noto Sans", sans-serif; color: #111; }
.defs { position: absolute; }
svg { display: block; flex: none; }
.app { display: flex; flex-direction: column; height: 768px; }
span, strong, b { white-space: nowrap; }
[data-w] { display: block; flex: none; }
u { text-underline-offset: 2px; }
.i { width: 16px; height: 16px; }
.a { width: 8px; height: 16px; fill: #000; }
.a.g { fill: #999; }

.titlebar { height: 21px; background: #fff; display: flex; align-items: center; padding: 0 7px 2px 3px; color: #909090; }
.title { margin-left: 5px; margin-top: 2px; }
.winbtns { margin-left: auto; }
.menu { height: 21px; background: #d6d6d6; display: flex; gap: 18px; align-items: center; padding: 1px 0 0 9px; }

.toolbar { display: grid; align-items: center; background: #f3f3f3; }
.standard { height: 30px; border-bottom: 1px solid #d0d0d0; padding: 2px 0 0 6px; grid-template-columns: 29px 22px 20px 28px 26px 10px 28px 28px 26px 10px 23px 20px 23px 18px 10px 26px 10px 28px 28px 26px 7px 91px 27px 7px 31px 25px 29px 11px 51px 17px 10px 29px 25px 10px 23px auto; }
.property { height: 41px; border-bottom: 1px solid #d4d4d4; padding: 1px 0 0 2px; grid-template-columns: 166px 15px 101px 7px 31px 26px 7px 31px 26px 9px 32px 96px 9px 18px 84px 9px 15px 101px 7px 29px 16px auto; }
.standard .sep { width: 1px; height: 22px; background: #d0d0d0; }
.property .sep { width: 1px; height: 33px; background: #d4d4d4; }
.pdf { font: 700 6px "Open Sans", sans-serif; }
.field { background: #fff; border: 1px solid #dcdfe6; display: flex; align-items: center; justify-content: space-between; padding: 0 3px 0 2px; }
.zoom { width: 83px; height: 23px; padding: 0 3px 0 4px; }
.select { height: 23px; border: 1px solid #707070; border-radius: 3px; background: linear-gradient(#f2f2f2, #e9e9e9 50%, #dadada 51%, #cfcfcf); display: flex; align-items: center; justify-content: space-between; padding: 0 3px 0 4px; }
.press { width: 23px; height: 23px; border: 1px solid #a8a8a8; background: #fdfdfd; display: grid; place-items: center; }
.w158 { width: 158px; margin-left: 1px; padding-left: 3px; }
.w90 { width: 90px; }
.w90 span { margin-left: -1px; }
.stack { display: flex; flex-direction: column; height: 33px; }
.stack .field { height: 16.5px; padding: 1px 0 0 2px; }
.w95 { width: 95px; }
.w94 { width: 94px; }
.sp { width: 18px; height: 14px; }
.tall { width: 78px; height: 23px; padding: 0 1px 0 2px; }

.work { height: 591px; display: flex; }
.tools { width: 30px; flex: none; border-right: 1px solid #d2d2d2; display: flex; flex-direction: column; align-items: center; }
.tools i { width: 22px; height: 1px; margin: 3.6px 0; background: #ccc; flex: none; }
.t { width: 28px; height: 28px; flex: none; }
.t svg { width: 28px; height: 28px; }
.t.on { background: linear-gradient(#fff, #fff) 4px 4px / 20px 20px no-repeat, linear-gradient(#a8a8a8, #a8a8a8) 3px 3px / 22px 22px no-repeat; }
.t.add { padding: 5px; margin-top: 7px; }
.t.add svg { width: 18px; height: 18px; }

.docarea { width: 1041px; flex: none; display: flex; flex-direction: column; }
.tabs { height: 19px; background: #e8e8e8; display: flex; flex: none; }
.tab { width: 69px; background: #cce1ff; padding: 2px 3px; }
.tab b { font-weight: 400; width: 46px; }
.newtab { width: 20px; background: #d5d5d5; display: grid; place-items: center; }
.notice { height: 32px; flex: none; border-top: 2px solid #11a9f3; border-bottom: 1px solid #8f9aaa; background: linear-gradient(#d2e5ff, #b3d2fb); box-shadow: inset 0 1px #8f9aaa; display: flex; align-items: center; padding: 0 8px 0 4px; }
.dash { margin: 0 8px 0 8px; width: 6px; }
.notice > [data-w="252"] { flex: 1 0 auto; }
.btn { font: inherit; color: #111; border: 1px solid #707070; border-radius: 3px; background: linear-gradient(#f3f3f3, #ececec 50%, #dcdcdc 51%, #d2d2d2); display: flex; align-items: center; justify-content: center; padding: 0; }
.upd { width: 78px; height: 23px; }
.q { margin: 0 12px 0 8px; font-family: "Open Sans", sans-serif; }
.hruler, .vruler { background: #f3f3f3; flex: none; }
.rn { font: 10px "Open Sans", sans-serif; fill: #888; text-anchor: middle; }
.view { display: flex; height: 499px; flex: none; }
.center { width: 1022px; }
.upper { display: flex; height: 481px; }
.arial { font-family: "Liberation Sans", Arial, sans-serif; fill: #0a0a0a; }
.lato { font: 12.3px Lato, sans-serif; fill: #1c1c1c; }
.cal { font: italic 700 15px Lato, sans-serif; }
.big { font-size: 16.5px; }
.vscroll { width: 17px; background: #fcfcfc; display: flex; flex-direction: column; justify-content: space-between; }
.cap { width: 16px; height: 17px; background: #f0f0f0; fill: #333; }
.vthumb { height: 73px; width: 15px; border: 1px solid #989898; border-radius: 2px; margin-top: 98px; background: repeating-linear-gradient(#555 0 1px, transparent 1px 3px) 3px 32px / 7px 7px no-repeat, linear-gradient(90deg, #f2f2f2, #ddd 50%, #c9c9c9); }
.pagenav { height: 18px; display: flex; align-items: center; background: #f3f3f3; }
.grey { fill: #858585; }
.pg { margin: 1px 0 0 4px; }
.pg + svg { margin-left: 21px; margin-right: -6px; }
.pagenav svg:first-child { margin-right: 1px; }
.pagenav .ptab { margin-left: 3px; width: 67px; height: 17px; background: #fff; clip-path: polygon(0 0, 59px 0, 67px 9px, 67px 17px, 0 17px); border-left: 1px solid #999; padding-left: 14px; flex: none; }
.ptab span { line-height: 15px; }
.grip { width: 281px; flex: 1 1 auto; height: 12px; background: repeating-linear-gradient(#aaa 0 2px, transparent 2px 4px) right 4px top / 1px 12px no-repeat; }
.hscroll { width: 493px; height: 17px; flex: none; display: flex; justify-content: space-between; background: #fdfdfd; }
.hthumb { width: 209px; height: 16px; border: 1px solid #989898; border-radius: 2px; margin-left: 72px; background: repeating-linear-gradient(90deg, #555 0 1px, transparent 1px 3px) 100px 4px / 7px 7px no-repeat, linear-gradient(#f2f2f2, #ddd 50%, #c9c9c9); }
.docpal { height: 20px; border-top: 1px solid #d2d2d2; display: flex; padding: 1px 6px 0 4px; }
.docpal > svg:first-child { margin-right: 4px; }
.sw { width: 18px; height: 18px; flex: none; border: 1px solid #4a4a4a; margin-right: -1px; }
svg.sw { border: 0; }
.k, .ink { background: #231815; }
.c { background: #009fe8; }
.more { margin-left: auto; }

.docker { width: 254px; margin-left: 2px; border-left: 1px solid #ccc; padding-left: 6px; display: flex; flex-direction: column; flex: none; }
.dhead { position: relative; z-index: 1; width: 271px; height: 19px; margin-left: -4px; padding: 1px 3px 0 1px; display: flex; justify-content: space-between; align-items: center; background: #e8e8e8; border-bottom: 1px solid #ccc; }
.recent { margin-top: 5px; }
.combo { width: 243px; height: 23px; padding: 0 4px 0 5px; margin-top: 5px; flex: none; }
.select.combo { padding-left: 3px; }
.aa { font: 700 9px "DejaVu Serif", serif; }
.glyphs { width: 243px; height: 356px; border: 1px solid #7a7f8a; background: #fff; display: flex; overflow: hidden; flex: none; }
.gridg { display: grid; grid-template-columns: repeat(5, 44px); grid-auto-rows: 41px; width: 225px; font: 31px/43px "Liberation Sans", Arial, sans-serif; text-align: center; color: #000; }
.sel { margin: 0 2px 0 4px; background: linear-gradient(#80bdf5, #80bdf5) 0 4px / 100% 1px no-repeat, linear-gradient(#c0dcf5, #c0dcf5) 0 16px / 100% 1px no-repeat, linear-gradient(#1674d8, #1674d8) 0 32px / 100% 1px no-repeat, linear-gradient(#80bdf5, #80bdf5) 0 39px / 100% 1px no-repeat; }
.gscroll { width: 16px; display: flex; flex-direction: column; background: #f1f1f1; }
.gthumb { height: 15px; border: 1px solid #989898; border-radius: 2px; background: linear-gradient(90deg, #f5f5f5, #ccc); margin: 2px 1px 0 0; }
.end { margin-top: auto; }
.expand { width: 245px; margin: 4px 0 4px -1px; height: 15px; flex: none; background: #e8e8e8; display: grid; place-items: center; }
.copy { width: 98px; height: 23px; margin-left: 73px; }

.dtabs { width: 20px; border-left: 1px solid #bbb; background: #e8e8e8; padding-top: 19px; flex: none; }
.dtabs div { background: #d5d5d5; border-bottom: 1px solid #f5f5f5; display: flex; flex-direction: column; align-items: center; padding-top: 4px; }
.dtabs div span { writing-mode: vertical-rl; line-height: 18px; margin-top: 4px; font-size: 11.7px; letter-spacing: -.33px; }
.dtabs .h1 { height: 72px; }
.dtabs .h2 { height: 135px; }
.dtabs .h3 { height: 75px; }
.dtabs .h4 { height: 26px; }
.dtabs .h5 { height: 126px; background: #b0b0b0; }
.dadd { margin: 16px 0 0 0; }
.palette { width: 19px; flex: none; background: #f3f3f3; border-left: 1px solid #ddd; }
.colors { height: 496px; overflow: hidden; background: #555; padding: 0 0 0 1px; }
.colors .sw { height: 17px; width: 17px; border-width: 0 0 1px 0; border-bottom: 1px solid #555; display: block; }

.status { height: 34px; border-top: 1px solid #d0d0d0; display: flex; align-items: center; padding-left: 5px; }
.status .pos { margin-right: 9px; }
.s1 { margin-left: 791px; }
.s2 { margin: 0 5px 0 13px; }
.s3 { margin-left: 4px; }
.status .sep { width: 1px; height: 22px; background: #ccc; margin-left: 132px; }
.s4 { margin: 0 5px 0 5px; }

.taskbar { height: 30px; background: linear-gradient(#888 0 1px, #464646 2px, #292929 12px, #1e1e1e); display: flex; align-items: center; border-top: 1px solid #151515; }
.taskbar > span { width: 42px; margin-right: 4px; height: 29px; display: grid; place-items: center; flex: none; }
.taskbar > span:first-child { width: 54px; margin-right: 6px; }
.taskbar > span > svg { width: 24px; height: 24px; font-family: "Liberation Serif", serif; }
.taskbar .pc { font-family: "Open Sans", sans-serif; }
.taskbar > .tb { border: 1px solid #aaa; border-radius: 2px; background: linear-gradient(155deg, #969696, #555 48%, #353535 50%, #454545); }
.taskbar > .exp { border-right-width: 4px; border-right-style: double; }
.taskbar > .lit { background: linear-gradient(155deg, #ddd, #aaa 48%, #777 50%, #aaa); border-color: #ddd; }
.tray { margin-left: 195px; display: flex; align-items: center; color: #fff; }
.tray span { margin-left: 23px; }
.peek { width: 14px; height: 29px; margin-left: auto; border: 1px solid #777; background: linear-gradient(#777, #333 45%, #222); }
```

FILE: app.js
```js
const palette = ["#231815", "#3e3a39", "#595757", "#727171", "#898989", "#9fa0a0", "#b5b5b6", "#c9caca", "#dcdddd", "#efefef", "#ffffff",
  "#1d2088", "#00a0e9", "#009944", "#fff100", "#e60012", "#e4007f", "#b04082", "#f08300", "#f4b3b3", "#897870", "#d2cde6", "#a69aca",
  "#708dc8", "#7b6ab0", "#9184b0", "#50648e", "#595270", "#7080a0"];
const colors = document.getElementById("colors");
palette.forEach(value => {
  const swatch = document.createElement("div");
  swatch.className = "sw";
  swatch.style.background = value;
  colors.appendChild(swatch);
});

// Spread the letters of each interface label over its design width.
document.querySelectorAll("[data-w]").forEach(label => {
  const width = Number(label.dataset.w);
  const range = document.createRange();
  range.selectNodeContents(label);
  const natural = range.getBoundingClientRect().width;
  label.style.letterSpacing = (width - natural) / label.textContent.length + "px";
});
```
